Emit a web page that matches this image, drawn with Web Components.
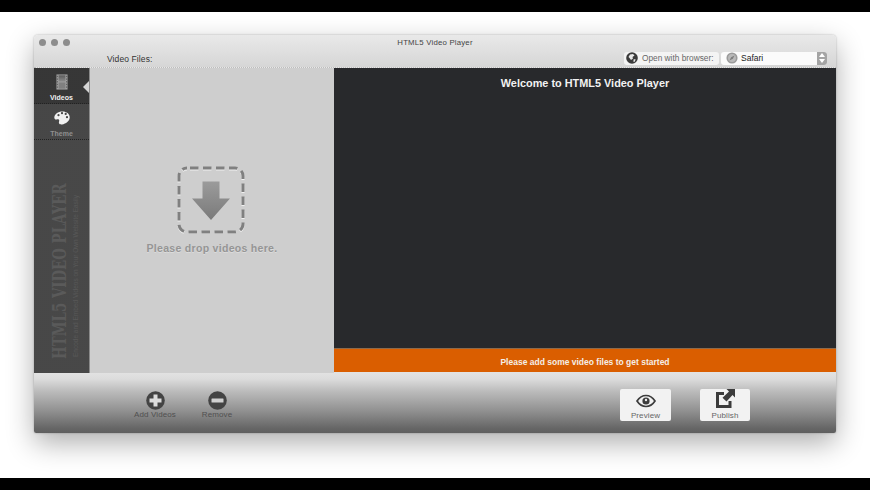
<!DOCTYPE html>
<html>
<head>
<meta charset="utf-8">
<title>HTML5 Video Player</title>
<style>
html, body { margin: 0; height: 100%; }
body { width: 870px; height: 490px; overflow: hidden; background: #fff; font-family: "Liberation Sans", Arial, sans-serif; }
</style>
</head>
<body>
<player-screen></player-screen>
<script>
// ================================================
// Icons
// ================================================
const ICONS = {
  film: `<svg width="12" height="16" viewBox="0 0 14 18" preserveAspectRatio="none"><defs><linearGradient id="f" x1="0" y1="0" x2="0" y2="1"><stop offset="0" stop-color="#5c5c5c"/><stop offset="1" stop-color="#8d8d8d"/></linearGradient></defs><rect x="0.5" y="0.5" width="13" height="17" fill="#a0a0a0"/><rect x="3" y="1.5" width="8" height="7" fill="url(#f)"/><rect x="3" y="9.500" width="8" height="7" fill="#808080"/><g fill="#4a4a4a"><rect x="1" y="2" width="1" height="1.5"/><rect x="1" y="5" width="1" height="1.5"/><rect x="1" y="8" width="1" height="1.5"/><rect x="1" y="11" width="1" height="1.5"/><rect x="1" y="14" width="1" height="1.5"/><rect x="12" y="2" width="1" height="1.5"/><rect x="12" y="5" width="1" height="1.5"/><rect x="12" y="8" width="1" height="1.5"/><rect x="12" y="11" width="1" height="1.5"/><rect x="12" y="14" width="1" height="1.5"/></g></svg>`,
  palette: `<svg width="16" height="14" viewBox="0 0 16 14"><path fill="#f1f1f1" fill-rule="evenodd" d="M8.5.4C4 .4.3 3 .3 6.6c0 1.6 1.2 2.3 2.4 1.9 1.2-.4 2.3-.3 2.5.8.2 1.2-.6 2-.2 3 .4 1 1.700 1.400 3 1.100 3.900-.6 7.700-3.300 7.700-7.200C15.700 2.700 12.600.4 8.500.4ZM3.400 4.200a1.100 1.100 0 1 1 2.200 0 1.100 1.100 0 0 1-2.200 0Zm3.500-2a1.100 1.100 0 1 1 2.200 0 1.100 1.100 0 0 1-2.200 0Zm3.700.7a1.100 1.100 0 1 1 2.200 0 1.100 1.100 0 0 1-2.200 0Zm1.300 3.300a1.100 1.100 0 1 1 2.200 0 1.100 1.100 0 0 1-2.200 0Z"/></svg>`,
  drop: `<svg width="68" height="68" viewBox="0 0 68 68"><rect x="2" y="2" width="64" height="64" rx="8" fill="none" stroke="#f0f0f0" stroke-width="3" stroke-dasharray="8.500 4.500" stroke-dashoffset="-3" transform="translate(0 1)"/><rect x="2" y="2" width="64" height="64" rx="8" fill="none" stroke="#808080" stroke-width="3" stroke-dasharray="8.500 4.500" stroke-dashoffset="-3"/><defs><linearGradient id="a" x1="0" y1="0" x2="0" y2="1"><stop offset="0" stop-color="#9b9b9b"/><stop offset="1" stop-color="#7a7a7a"/></linearGradient></defs><path fill="url(#a)" d="M25.500 15.500h17v17H53L34 54 15 32.500h10.500Z"/></svg>`,
  plus: `<svg width="19" height="19" viewBox="0 0 19 19"><circle cx="9.500" cy="9.500" r="9.300" fill="#444"/><path fill="#dcdcdc" d="M7.500 3.500h4v4h4v4h-4v4h-4v-4h-4v-4h4Z"/></svg>`,
  minus: `<svg width="19" height="19" viewBox="0 0 19 19"><circle cx="9.500" cy="9.500" r="9.300" fill="#444"/><rect x="3.500" y="7.500" width="12" height="4" rx="0.500" fill="#d0d0d0"/></svg>`,
  eye: `<svg width="20" height="14" viewBox="0 0 20 14"><path fill="none" stroke="#3c3c3c" stroke-width="1.700" d="M1 7c2.300-3.500 5.300-5.500 9-5.500S16.700 3.500 19 7c-2.300 3.500-5.300 5.500-9 5.500S3.300 10.500 1 7Z"/><circle cx="10" cy="7" r="3.600" fill="#3c3c3c"/><circle cx="10" cy="6" r="1.200" fill="#f0f0f0"/></svg>`,
  share: `<svg width="19" height="19" viewBox="0 0 19 19"><path fill="none" stroke="#3c3c3c" stroke-width="3" d="M8 4.500H1.500v13h12.500V12"/><path fill="#3c3c3c" d="M10.500 0H19v8.500l-2.500-2.500-6 6.500L6.500 8.700l6.500-6.200Z"/></svg>`,
  globe: `<svg width="12" height="12" viewBox="0 0 12 12"><circle cx="6" cy="6" r="5.800" fill="#3b3b3b"/><path fill="#e8e8e8" d="M4 2.500 7 2l1.500 1.500-2 1.500.5 1.500L5 8 3.500 6 2.500 5ZM7.500 7.500 9.500 7l-.5 2.500L7.500 10Z"/></svg>`,
  safari: `<svg width="12" height="12" viewBox="0 0 14 14"><circle cx="7" cy="7" r="6.500" fill="#9a9a9a"/><circle cx="7" cy="7" r="4.600" fill="#b9b9b9"/><path fill="#7c7c7c" d="M10 4 8 8 4 10 6 6Z"/></svg>`,
  updown: `<svg width="6" height="10" viewBox="0 0 6 10"><path fill="#fff" d="M3 0 6 4H0ZM3 10 0 6h6Z"/></svg>`
};

// tiny dots seen across the dark sidebar
const DOTS = 'radial-gradient(circle at 1px 1px, rgba(255,255,255,.09) .6px, transparent .9px)';

function define(name, css, html) {
  customElements.define(name, class extends HTMLElement {
    constructor() {
      super();
      const root = this.attachShadow({ mode: 'open' });
      root.innerHTML = `<style>${css}</style>${typeof html === 'function' ? html(this) : html}`;
    }
  });
}

// ================================================
// Title bar
// ================================================
define('title-bar', `
  :host { display: block; height: 33px; background: linear-gradient(#e9e9e9, #d6d6d6); box-sizing: border-box; border-bottom: 1px dotted #bdbdbd; font-size: 8.500px; color: #333; }
  .top { display: grid; grid-template-columns: 1fr auto 1fr; align-items: center; height: 14px; padding: 0 5px; }
  .dots { display: flex; gap: 5px; }
  .dots i { width: 7px; height: 7px; border-radius: 50%; background: #8d8d8d; }
  .title { font-size: 7.800px; color: #444; letter-spacing: .2px; }
  .row { display: flex; align-items: center; height: 18px; padding: 0 9px 0 73px; }
  .files { color: #333; letter-spacing: .1px; margin-top: 2px; }
  .open { margin-left: auto; height: 13px; width: 95px; display: flex; align-items: center; gap: 4px; padding-left: 2px; box-sizing: border-box; background: #f4f4f4; border-radius: 3px; color: #666; font-size: 8.300px; white-space: nowrap; }
  .open svg, .sel svg { flex: none; }
  .sel { margin-left: 2px; width: 106px; height: 13px; display: flex; align-items: center; gap: 3px; padding-left: 5px; box-sizing: border-box; background: #fbfbfb; border-radius: 3px; color: #222; overflow: hidden; }
  .arrows { margin-left: auto; flex: none; width: 10px; height: 13px; background: #a4a4a4; display: flex; align-items: center; justify-content: center; }
`, `
  <div class="top">
    <div class="dots"><i></i><i></i><i></i></div>
    <div class="title">HTML5 Video Player</div>
    <div></div>
  </div>
  <div class="row">
    <span class="files">Video Files:</span>
    <span class="open">${ICONS.globe}Open with browser:</span>
    <span class="sel">${ICONS.safari}Safari<span class="arrows">${ICONS.updown}</span></span>
  </div>
`);

// ================================================
// Sidebar
// ================================================
define('nav-item', `
  :host { display: flex; flex-direction: column; align-items: center; height: 36px; box-sizing: border-box; padding-top: 5px; position: relative; background-color: #3c3c3c; background-image: ${DOTS}; background-size: 2px 2px; border-bottom: 1px dotted #222; font-size: 7px; font-weight: bold; color: #8f8f8f; }
  :host([active]) { background-color: #2a2a2a; color: #f0f0f0; }
  :host([active])::after { content: ""; position: absolute; right: 0; top: 13px; border: 6px solid transparent; border-right-color: #d4d4d4; border-left-width: 0; }
  .ico { height: 18px; display: flex; align-items: center; }
  .lbl { margin-top: 2px; line-height: 9px; }
`, el => `<div class="ico">${ICONS[el.getAttribute('icon')]}</div><div class="lbl"><slot></slot></div>`);

define('side-bar', `
  :host { display: flex; flex-direction: column; width: 55px; flex: none; background-color: #3d3d3d; background-image: ${DOTS}; background-size: 2px 2px; border-right: 1px solid #8a8a8a; }
  .brand { flex: 1; display: flex; align-items: flex-end; gap: 6px; padding: 0 0 13px 19px; min-height: 0; }
  .fit { height: 177px; width: 14px; flex: none; display: flex; align-items: center; justify-content: center; }
  .big, .small { writing-mode: vertical-rl; white-space: nowrap; }
  .big { font-family: "DejaVu Serif", serif; font-size: 18px; font-weight: bold; line-height: 14px; color: #5a5a5a; transform: rotate(180deg) scaleY(.743); flex: none; }
  .small { font-size: 6.500px; line-height: 6px; color: #585858; transform: rotate(180deg); margin-bottom: 3px; }
`, `
  <slot></slot>
  <div class="brand">
    <div class="fit"><div class="big">HTML5 VIDEO PLAYER</div></div>
    <div class="small">Encode and Embed Videos on Your Own Website Easily</div>
  </div>
`);

// ================================================
// Panels
// ================================================
define('drop-zone', `
  :host { display: flex; flex-direction: column; align-items: center; width: 244px; flex: none; background: #cecece; padding-top: 98px; box-sizing: border-box; }
  .msg { margin-top: 8px; font-size: 10.500px; font-weight: bold; color: #959595; letter-spacing: .3px; line-height: 12px; text-shadow: 0 1px 0 #dcdcdc; white-space: nowrap; }
  svg { display: block; margin-right: 2px; }
`, `${ICONS.drop}<div class="msg">Please drop videos here.</div>`);

define('video-stage', `
  :host { display: flex; flex-direction: column; flex: 1; min-width: 0; background: #e2e2e2; }
  .screen { flex: 1; background: #28292c; color: #f2f2f2; text-align: center; font-size: 10.900px; font-weight: bold; padding-top: 9px; line-height: 13px; box-sizing: border-box; }
  .notice { height: 24px; margin-bottom: 1px; padding-top: 2px; flex: none; display: flex; align-items: center; justify-content: center; background: #da5e00; color: #f4efe8; font-size: 8.500px; font-weight: bold; border-top: 1px solid #8d6a4c; box-sizing: border-box; }
`, `
  <div class="screen">Welcome to HTML5 Video Player</div>
  <div class="notice">Please add some video files to get started</div>
`);

// ================================================
// Bottom toolbar
// ================================================
define('tool-item', `
  :host { display: flex; flex-direction: column; align-items: center; font-size: 8px; color: #505050; width: 50px; letter-spacing: .1px; }
  .lbl { margin-top: 0; line-height: 10px; white-space: nowrap; }
  svg { display: block; }
`, el => `${ICONS[el.getAttribute('icon')]}<div class="lbl"><slot></slot></div>`);

define('card-button', `
  :host { display: flex; flex-direction: column; align-items: center; justify-content: flex-end; width: 51px; height: 32px; box-sizing: border-box; background: #f2f2f2; border-radius: 2px; font-size: 8px; color: #666; letter-spacing: .1px; }
  :host([narrow]) { width: 50px; }
  .lbl { line-height: 11px; margin-top: 2px; }
  svg { display: block; }
`, el => `${ICONS[el.getAttribute('icon')]}<div class="lbl"><slot></slot></div>`);

define('tool-bar', `
  :host { display: flex; align-items: flex-start; height: 60px; flex: none; box-sizing: border-box; padding: 16px 86px 0 96px; background: linear-gradient(#e2e2e2 0, #dcdcdc 10%, #bcbcbc 30%, #8e8e8e 65%, #666 92%, #5f5f5f 100%); }
  .left { display: flex; gap: 12px; margin: 2px 0 0 0; }
  .right { margin-left: auto; display: flex; gap: 29px; }
`, `
  <div class="left">
    <tool-item icon="plus">Add Videos</tool-item>
    <tool-item icon="minus">Remove</tool-item>
  </div>
  <div class="right">
    <card-button icon="eye">Preview</card-button>
    <card-button icon="share" narrow>Publish</card-button>
  </div>
`);

// ================================================
// Window and page
// ================================================
define('app-window', `
  :host { display: flex; flex-direction: column; width: 802px; height: 398px; border-radius: 4px 4px 2px 2px; overflow: hidden; box-shadow: 0 10px 28px rgba(0,0,0,.32), 0 0 2px rgba(0,0,0,.3); }
  .body { display: flex; flex: 1; min-height: 0; }
`, `
  <title-bar></title-bar>
  <div class="body"><slot></slot></div>
  <tool-bar></tool-bar>
`);

define('player-screen', `
  :host { display: flex; flex-direction: column; height: 490px; }
  .bar { height: 12px; background: #000; flex: none; }
  .desk { flex: 1; background: #fff; padding: 23px 0 0 34px; }
`, `
  <div class="bar"></div>
  <div class="desk">
    <app-window>
      <side-bar>
        <nav-item icon="film" active>Videos</nav-item>
        <nav-item icon="palette">Theme</nav-item>
      </side-bar>
      <drop-zone></drop-zone>
      <video-stage></video-stage>
    </app-window>
  </div>
  <div class="bar"></div>
`);
</script>
</body>
</html>
